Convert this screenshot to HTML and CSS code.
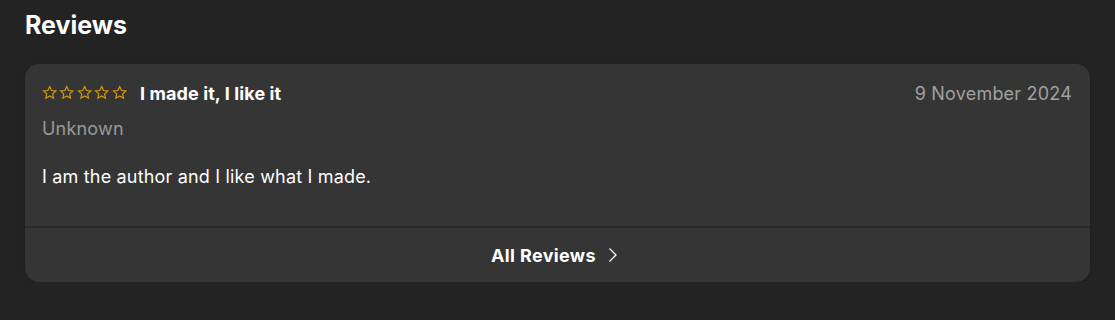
FILE: index.html
```html
<!DOCTYPE html>
<html>
<head>
<meta charset="utf-8">
<link rel="stylesheet" href="styles.css">
</head>
<body>
<section class="reviews">
  <h2 class="title">Reviews</h2>
  <div class="card">
    <div class="content">
      <div class="head">
        <div class="stars">
          <svg viewBox="0 0 24 24"><path d="M12 2.5l2.9 6.1 6.6.8-4.9 4.5 1.3 6.6L12 17.2l-5.9 3.3 1.3-6.6-4.9-4.5 6.6-.8z"/></svg>
          <svg viewBox="0 0 24 24"><path d="M12 2.5l2.9 6.1 6.6.8-4.9 4.5 1.3 6.6L12 17.2l-5.9 3.3 1.3-6.6-4.9-4.5 6.6-.8z"/></svg>
          <svg viewBox="0 0 24 24"><path d="M12 2.5l2.9 6.1 6.6.8-4.9 4.5 1.3 6.6L12 17.2l-5.9 3.3 1.3-6.6-4.9-4.5 6.6-.8z"/></svg>
          <svg viewBox="0 0 24 24"><path d="M12 2.5l2.9 6.1 6.6.8-4.9 4.5 1.3 6.6L12 17.2l-5.9 3.3 1.3-6.6-4.9-4.5 6.6-.8z"/></svg>
          <svg viewBox="0 0 24 24"><path d="M12 2.5l2.9 6.1 6.6.8-4.9 4.5 1.3 6.6L12 17.2l-5.9 3.3 1.3-6.6-4.9-4.5 6.6-.8z"/></svg>
        </div>
        <span class="rtitle">I made it, I like it</span>
        <span class="date">9 November 2024</span>
      </div>
      <div class="author">Unknown</div>
      <p class="body">I am the author and I like what I made.</p>
    </div>
    <div class="footer">
      <span>All Reviews</span>
      <svg class="chev" viewBox="0 0 10 16"><path d="M1.5 1.5l6.5 6.5-6.5 6.5"/></svg>
    </div>
  </div>
</section>
</body>
</html>
```
FILE: styles.css
```css
html, body {
  margin: 0;
  background: #232323;
  font-family: Inter, "Noto Sans", sans-serif;
  color: #fff;
}
.reviews {
  padding: 10px 25px 0 25px;
}
.title {
  margin: 0;
  font-size: 25px;
  font-weight: 700;
  line-height: 30px;
}
.card {
  margin-top: 24px;
  background: #353535;
  border-radius: 14px;
  box-shadow: 0 1px 2px rgba(0,0,0,0.25);
  overflow: hidden;
}
.content {
  padding: 18px 18px 38px 17px;
  border-bottom: 2px solid #2a2a2a;
}
.head {
  display: flex;
  align-items: center;
  height: 22px;
}
.stars {
  display: flex;
  gap: 2px;
}
.stars svg {
  width: 15.4px;
  height: 15.4px;
  fill: none;
  stroke: #dc9b0c;
  stroke-width: 1.8;
  stroke-linejoin: miter;
}
.rtitle {
  margin-left: 13px;
  font-size: 18px;
  font-weight: 700;
  letter-spacing: 0.1px;
}
.date {
  margin-left: auto;
  font-size: 18px;
  color: #a0a0a0;
  letter-spacing: 0.2px;
}
.author {
  margin-top: 14px;
  font-size: 18px;
  line-height: 22px;
  color: #999;
  letter-spacing: 0.2px;
}
.body {
  margin: 26px 0 0 0;
  font-size: 18px;
  line-height: 22px;
  color: #fff;
  letter-spacing: 0.18px;
}
.footer {
  height: 54px;
  display: flex;
  align-items: center;
  justify-content: center;
  gap: 12px;
  padding-right: 6px;
  font-size: 18px;
  font-weight: 700;
  letter-spacing: 0.35px;
}
.chev {
  width: 10px;
  height: 16px;
  fill: none;
  stroke: #fff;
  stroke-width: 1.3;
}
```
